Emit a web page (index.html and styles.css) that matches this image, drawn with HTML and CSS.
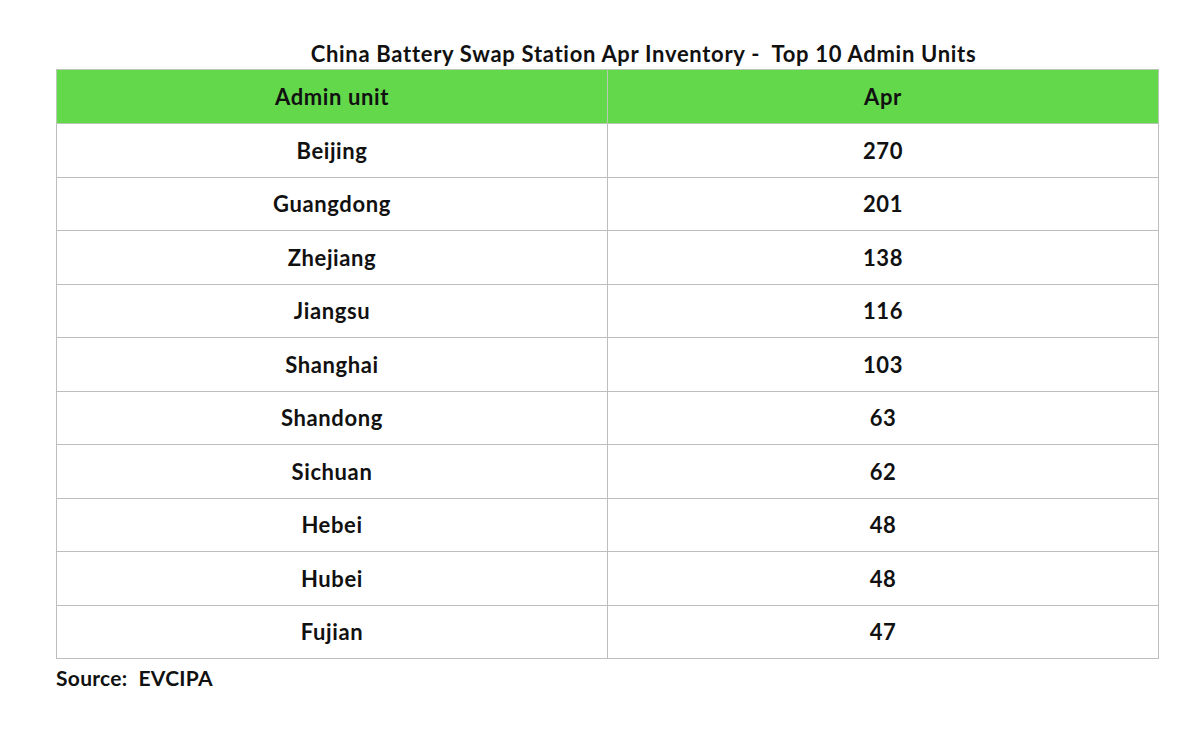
FILE: index.html
```html
<!DOCTYPE html>
<html>
<head>
<meta charset="utf-8">
<link rel="stylesheet" href="styles.css">
</head>
<body>
<div class="page">
  <div class="title">China Battery Swap Station Apr Inventory -&nbsp; Top 10 Admin Units</div>
  <table class="grid">
    <thead>
      <tr><th>Admin unit</th><th>Apr</th></tr>
    </thead>
    <tbody>
      <tr><td>Beijing</td><td>270</td></tr>
      <tr><td>Guangdong</td><td>201</td></tr>
      <tr><td>Zhejiang</td><td>138</td></tr>
      <tr><td>Jiangsu</td><td>116</td></tr>
      <tr><td>Shanghai</td><td>103</td></tr>
      <tr><td>Shandong</td><td>63</td></tr>
      <tr><td>Sichuan</td><td>62</td></tr>
      <tr><td>Hebei</td><td>48</td></tr>
      <tr><td>Hubei</td><td>48</td></tr>
      <tr><td>Fujian</td><td>47</td></tr>
    </tbody>
  </table>
  <div class="source">Source: &nbsp;EVCIPA</div>
</div>
</body>
</html>
```

FILE: styles.css
```css
html, body {
  margin: 0;
  padding: 0;
  background: #ffffff;
}
body {
  font-family: "Lato", "Liberation Sans", sans-serif;
  color: #111111;
}
.page {
  padding: 41px 0 0 56px;
  width: 1103px;
}
.title {
  height: 28px;
  font-size: 22px;
  font-weight: 700;
  line-height: 26px;
  letter-spacing: 0.7px;
  text-align: center;
  padding-left: 72px;
  white-space: nowrap;
}
.grid {
  width: 1103px;
  border-collapse: collapse;
  table-layout: fixed;
}
.grid th, .grid td {
  border: 1px solid #bdbdbd;
  text-align: center;
  font-size: 22px;
  font-weight: 700;
  letter-spacing: 0.6px;
  padding: 0;
}
.grid th {
  background: #63d84b;
  height: 53px;
  border-color: #b7c9b3;
}
.grid td {
  height: 52.5px;
}
.grid th:first-child, .grid td:first-child {
  width: 550px;
}
.source {
  margin-top: 7px;
  font-size: 21px;
  font-weight: 700;
  line-height: 24px;
  letter-spacing: 0.3px;
}
```
